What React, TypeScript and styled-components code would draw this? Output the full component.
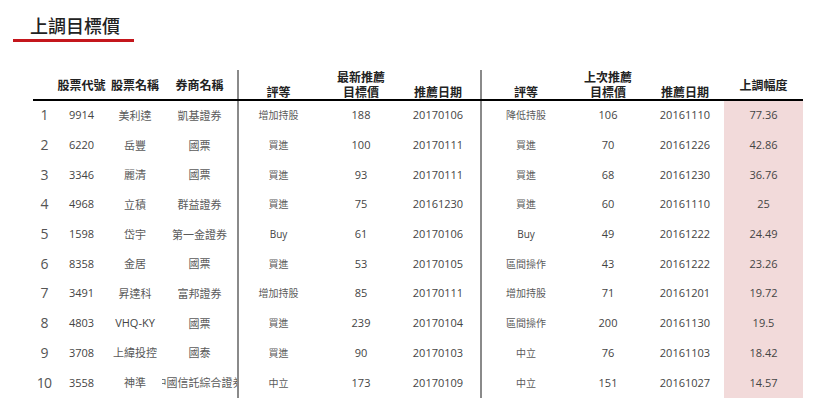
import styled, { createGlobalStyle } from "styled-components";

const GlobalStyle = createGlobalStyle`
 html, body {
  margin: 0;
  padding: 0;
  background: #fff;
 }
 body {
  font-family: "Open Sans", "Noto Sans CJK TC", sans-serif;
 }
`;

interface Row {
 code: string;
 name: string;
 broker: string;
 rating: string;
 target: number;
 date: string;
 prevRating: string;
 prevTarget: number;
 prevDate: string;
 pct: string;
}

const rows: Row[] = [
 { code: "9914", name: "美利達", broker: "凱基證券", rating: "增加持股", target: 188, date: "20170106", prevRating: "降低持股", prevTarget: 106, prevDate: "20161110", pct: "77.36" },
 { code: "6220", name: "岳豐", broker: "國票", rating: "買進", target: 100, date: "20170111", prevRating: "買進", prevTarget: 70, prevDate: "20161226", pct: "42.86" },
 { code: "3346", name: "麗清", broker: "國票", rating: "買進", target: 93, date: "20170111", prevRating: "買進", prevTarget: 68, prevDate: "20161230", pct: "36.76" },
 { code: "4968", name: "立積", broker: "群益證券", rating: "買進", target: 75, date: "20161230", prevRating: "買進", prevTarget: 60, prevDate: "20161110", pct: "25" },
 { code: "1598", name: "岱宇", broker: "第一金證券", rating: "Buy", target: 61, date: "20170106", prevRating: "Buy", prevTarget: 49, prevDate: "20161222", pct: "24.49" },
 { code: "8358", name: "金居", broker: "國票", rating: "買進", target: 53, date: "20170105", prevRating: "區間操作", prevTarget: 43, prevDate: "20161222", pct: "23.26" },
 { code: "3491", name: "昇達科", broker: "富邦證券", rating: "增加持股", target: 85, date: "20170111", prevRating: "增加持股", prevTarget: 71, prevDate: "20161201", pct: "19.72" },
 { code: "4803", name: "VHQ-KY", broker: "國票", rating: "買進", target: 239, date: "20170104", prevRating: "區間操作", prevTarget: 200, prevDate: "20161130", pct: "19.5" },
 { code: "3708", name: "上緯投控", broker: "國泰", rating: "買進", target: 90, date: "20170103", prevRating: "中立", prevTarget: 76, prevDate: "20161103", pct: "18.42" },
 { code: "3558", name: "神準", broker: "中國信託綜合證券", rating: "中立", target: 173, date: "20170109", prevRating: "中立", prevTarget: 151, prevDate: "20161027", pct: "14.57" },
];

const COLUMNS = "22px 53px 54px 75px 81px 86px 76px 90px 76px 78px 79px";

const Page = styled.div`
 padding: 13px 0 0 0;
`;

const Title = styled.h1`
 margin: 0 0 0 13px;
 width: 104px;
 padding: 0 0 2px 17px;
 border-bottom: 3px solid #c4161c;
 font-family: "Noto Sans CJK TC", sans-serif;
 font-size: 18px;
 line-height: 24px;
 font-weight: 500;
 color: #222;
 white-space: nowrap;
`;

const Table = styled.div`
 margin: 28px 0 0 33px;
 width: 770px;
`;

const HeadRow = styled.div`
 display: grid;
 grid-template-columns: ${COLUMNS};
 height: 29px;
 border-bottom: 2px solid #000;
`;

const HeadCell = styled.div<{ $divider?: boolean; $middle?: boolean; $pad?: number }>`
 display: flex;
 flex-direction: column;
 align-items: center;
 justify-content: ${(p) => (p.$middle ? "center" : "flex-end")};
 padding-top: ${(p) => (p.$middle ? "2px" : "0")};
 padding-right: ${(p) => p.$pad ?? 0}px;
 border-left: ${(p) => (p.$divider ? "2px solid #8a8a8a" : "none")};
 font-family: "Noto Sans CJK TC", sans-serif;
 font-size: 12px;
 line-height: 14.5px;
 font-weight: 700;
 color: #222;
 white-space: nowrap;
`;

const BodyRow = styled.div`
 display: grid;
 grid-template-columns: ${COLUMNS};
 height: 29.7px;
`;

const Cell = styled.div<{
 $divider?: boolean;
 $pink?: boolean;
 $size?: number;
 $cjk?: boolean;
 $pad?: number;
}>`
 display: flex;
 align-items: center;
 justify-content: center;
 overflow: hidden;
 white-space: nowrap;
 padding-right: ${(p) => p.$pad ?? 0}px;
 padding-bottom: 2px;
 border-left: ${(p) => (p.$divider ? "2px solid #8a8a8a" : "none")};
 background: ${(p) => (p.$pink ? "#f2dada" : "transparent")};
 font-family: ${(p) =>
  p.$cjk ? '"Noto Sans CJK TC", sans-serif' : '"Open Sans", "Noto Sans CJK TC", sans-serif'};
 font-size: ${(p) => p.$size ?? 11}px;
 color: ${(p) => (p.$cjk ? "#5a5a5a" : "#444")};
`;

const Rank = styled(Cell)`
 font-size: 14px;
 letter-spacing: -0.8px;
 color: #555;
`;

const isLatin = (s: string) => /^[A-Za-z0-9\- ]+$/.test(s);

export default function App() {
 return (
  <Page>
   <GlobalStyle />
   <Title>上調目標價</Title>
   <Table>
    <HeadRow>
     <HeadCell />
     <HeadCell $middle>股票代號</HeadCell>
     <HeadCell $middle>股票名稱</HeadCell>
     <HeadCell $middle>券商名稱</HeadCell>
     <HeadCell $divider>評等</HeadCell>
     <HeadCell>
      <span>最新推薦</span>
      <span>目標價</span>
     </HeadCell>
     <HeadCell $pad={8}>推薦日期</HeadCell>
     <HeadCell $divider>評等</HeadCell>
     <HeadCell>
      <span>上次推薦</span>
      <span>目標價</span>
     </HeadCell>
     <HeadCell>推薦日期</HeadCell>
     <HeadCell $middle>上調幅度</HeadCell>
    </HeadRow>
    {rows.map((r, i) => (
     <BodyRow key={r.code}>
      <Rank>{i + 1}</Rank>
      <Cell>{r.code}</Cell>
      <Cell $cjk={!isLatin(r.name)}>{r.name}</Cell>
      <Cell $cjk>{r.broker}</Cell>
      <Cell $divider $cjk={!isLatin(r.rating)} $size={10}>
       {r.rating}
      </Cell>
      <Cell>{r.target}</Cell>
      <Cell $pad={8}>{r.date}</Cell>
      <Cell $divider $cjk={!isLatin(r.prevRating)} $size={10}>
       {r.prevRating}
      </Cell>
      <Cell>{r.prevTarget}</Cell>
      <Cell>{r.prevDate}</Cell>
      <Cell $pink>{r.pct}</Cell>
     </BodyRow>
    ))}
   </Table>
  </Page>
 );
}
